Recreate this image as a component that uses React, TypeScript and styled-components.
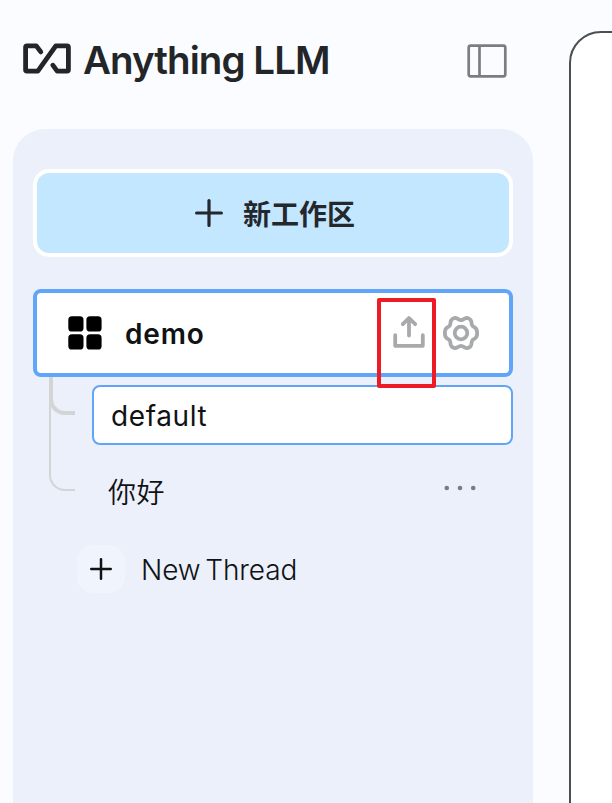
import React from "react";
import styled, { createGlobalStyle } from "styled-components";

const Global = createGlobalStyle`
  * { box-sizing: border-box; }
  html, body { margin: 0; background: #fafcff; overflow: hidden; }
  body { font-family: Inter, "Noto Sans CJK SC", sans-serif; color: #101214; }
  svg { display: block; flex: none; }
`;

const Page = styled.div`
  display: flex;
  height: 803px;
  width: 612px;
  overflow: hidden;
  background: #fafcff;
`;

const Sidebar = styled.aside`
  flex: none;
  width: 569px;
  padding-left: 13px;
  display: flex;
  flex-direction: column;
`;

const Header = styled.header`
  height: 129px;
  width: 520px;
  padding: 36px 26px 0 10px;
  display: flex;
  align-items: flex-start;
  justify-content: space-between;
`;

const Brand = styled.div`
  display: flex;
  align-items: flex-start;
  height: 48px;
  gap: 12px;
  padding-top: 7px;
  color: #222628;
`;

const BrandName = styled.span`
  margin-top: -7px;
  font-size: 38.5px;
  font-weight: 600;
  line-height: 48px;
  letter-spacing: -0.95px;
  white-space: nowrap;
`;

const SidebarToggle = styled.button`
  padding: 8px 0 0;
  border: 0;
  background: none;
  color: #7c7d7f;
`;

const Card = styled.div`
  width: 520px;
  flex: 1;
  padding: 40px 20px 0;
  border-radius: 32px 32px 0 0;
  background: #ecf0fa;
`;

const NewWorkspace = styled.button`
  display: flex;
  align-items: center;
  justify-content: center;
  gap: 20px;
  width: 480px;
  height: 88px;
  padding: 0 0 0 4px;
  border: 4px solid #fff;
  border-radius: 16px;
  background: #c3e7ff;
  color: #24272c;
  font: 700 28px/40px "Noto Sans CJK SC", sans-serif;
`;

const Workspace = styled.div`
  position: relative;
  z-index: 1;
  display: flex;
  align-items: center;
  width: 480px;
  height: 88px;
  margin-top: 32px;
  padding: 0 30px 0 31px;
  border: 4px solid #60a5fa;
  border-radius: 8px;
  background: #fff;
  color: #000;
`;

const WorkspaceName = styled.span`
  flex: 1;
  padding: 2px 0 0 23px;
  font-size: 28px;
  font-weight: 600;
  line-height: 36px;
  letter-spacing: 0.8px;
  color: #101214;
`;

const Actions = styled.div`
  display: flex;
  gap: 18px;
  color: #a7a9ab;
`;

const Highlight = styled.div`
  position: absolute;
  left: 340px;
  top: 5px;
  width: 59px;
  height: 90px;
  border: 4px solid #ed1c24;
  border-radius: 2px;
`;

const Threads = styled.div`
  position: relative;
  padding: 8px 0 0 59px;
`;

const Branch = styled.div<{ $height: number; $thick?: boolean }>`
  position: absolute;
  left: 16px;
  top: 0;
  width: 26px;
  height: ${(p) => p.$height}px;
  border: solid #d3d4d6;
  border-width: ${(p) => (p.$thick ? "0 0 4px 4px" : "0 0 2px 2px")};
  border-bottom-left-radius: 16px;
`;

const Thread = styled.div<{ $active?: boolean }>`
  display: flex;
  align-items: center;
  justify-content: space-between;
  height: ${(p) => (p.$active ? 60 : 84)}px;
  padding: ${(p) => (p.$active ? "2px 16px 0 17px" : "2px 37px 0 16px")};
  border: ${(p) => (p.$active ? "2px solid #60a5fa" : "0")};
  border-radius: 8px;
  background: ${(p) => (p.$active ? "#fff" : "transparent")};
  color: #7a7c7f;
`;

const ThreadName = styled.span<{ $cjk?: boolean }>`
  padding-top: ${(p) => (p.$cjk ? 6 : 0)}px;
  font-family: ${(p) => (p.$cjk ? '"Noto Sans CJK SC"' : "Inter")}, sans-serif;
  font-size: 28px;
  font-weight: ${(p) => (p.$cjk ? 350 : 400)};
  line-height: 40px;
  letter-spacing: ${(p) => (p.$cjk ? "0.4px" : "0.6px")};
  color: #101214;
`;

const NewThread = styled.button`
  display: flex;
  align-items: center;
  gap: 16px;
  margin: 16px 0 0 44px;
  padding: 0;
  border: 0;
  background: none;
  font: 300 28px/40px Inter, sans-serif;
  word-spacing: -3px;
  letter-spacing: -0.1px;
  color: #101214;
`;

const NewThreadLabel = styled.span`
  padding-top: 2px;
`;

const PlusTile = styled.span`
  display: grid;
  place-items: center;
  width: 48px;
  height: 48px;
  border-radius: 16px;
  background: #f0f4fc;
`;

const MainPanel = styled.main`
  flex: none;
  width: 100px;
  height: 900px;
  margin-top: 31px;
  border: 2px solid #4b4e52;
  border-radius: 32px;
  background: #fff;
`;

const Logo = () => (
  <svg width="48" height="31" viewBox="0 0 48 31" fill="none" stroke="currentColor" strokeWidth="4.8" strokeLinecap="round" strokeLinejoin="round">
    <path d="M17.8 8.9 13.3 2.8H4Q2.6 2.8 2.6 4.2v22.6Q2.6 28.2 4 28.2h10.8L32.8 2.8H44Q45.4 2.8 45.4 4.2v22.6Q45.4 28.2 44 28.2h-9.8L29.8 22.2" />
  </svg>
);

const Panels = () => (
  <svg width="40" height="34" viewBox="0 0 40 34" fill="none" stroke="currentColor" strokeWidth="2.7">
    <rect x="1.7" y="1.7" width="36.6" height="30.6" rx="2" />
    <path d="M12.5 2v30" />
  </svg>
);

const Plus = ({ size, weight }: { size: number; weight: number }) => (
  <svg width={size} height={size} viewBox={`0 0 ${size} ${size}`} stroke="currentColor" strokeWidth={weight} strokeLinecap="round">
    <path d={`M${size / 2} ${weight / 2}V${size - weight / 2}M${weight / 2} ${size / 2}H${size - weight / 2}`} />
  </svg>
);

const Squares = () => (
  <svg width="34" height="34" viewBox="0 0 34 34" fill="currentColor">
    <rect x="0.3" y="0.3" width="15.2" height="15.2" rx="3.6" />
    <rect x="18.4" y="0.3" width="15.2" height="15.2" rx="3.6" />
    <rect x="0.3" y="18.3" width="15.2" height="15.2" rx="3.6" />
    <rect x="18.4" y="18.3" width="15.2" height="15.2" rx="3.6" />
  </svg>
);

const Upload = () => (
  <svg width="32" height="36" viewBox="0 0 32 36" fill="none" stroke="currentColor" strokeWidth="3.8" strokeLinecap="round" strokeLinejoin="round">
    <path d="M2.2 20.2v10.6h27.6V20.2M16 20.5V3.2M9.8 9.2 16 3l6.2 6.2" />
  </svg>
);

const Gear = () => (
  <svg width="36" height="36" viewBox="0 0 36 36" fill="none" stroke="currentColor" strokeWidth="3.8" strokeLinejoin="round">
    <circle cx="18" cy="18" r="6.3" />
    <path d="M18 5.2C20.4 5.2 21.9 2.8 24 2.8Q28 4 28.4 6.8C28.7 10.4 29 11 31.6 12.4Q34.3 14 34.1 18Q34.3 22 31.6 23.6C29 25 28.7 25.6 28.4 29.2Q28 32 24 33.2C21.9 33.2 20.4 30.8 18 30.8C15.6 30.8 14.1 33.2 12 33.2Q8 32 7.6 29.2C7.3 25.6 7 25 4.4 23.6Q1.7 22 1.9 18Q1.7 14 4.4 12.4C7 11 7.3 10.4 7.6 6.8Q8 4 12 2.8C14.1 2.8 15.6 5.2 18 5.2Z" />
  </svg>
);

const Dots = () => (
  <svg width="32" height="6" viewBox="0 0 32 6" fill="currentColor">
    <circle cx="2.8" cy="3" r="2.3" />
    <circle cx="16" cy="3" r="2.3" />
    <circle cx="29.2" cy="3" r="2.3" />
  </svg>
);

export default function App() {
  return (
    <>
      <Global />
      <Page>
        <Sidebar>
          <Header>
            <Brand>
              <Logo />
              <BrandName>Anything LLM</BrandName>
            </Brand>
            <SidebarToggle aria-label="Toggle sidebar">
              <Panels />
            </SidebarToggle>
          </Header>
          <Card>
            <NewWorkspace>
              <Plus size={28} weight={3.2} />
              新工作区
            </NewWorkspace>
            <Workspace>
              <Squares />
              <WorkspaceName>demo</WorkspaceName>
              <Actions>
                <Upload />
                <Gear />
              </Actions>
              <Highlight />
            </Workspace>
            <Threads>
              <Branch $height={38} $thick />
              <Branch $height={114} />
              <Thread $active>
                <ThreadName>default</ThreadName>
              </Thread>
              <Thread>
                <ThreadName $cjk>你好</ThreadName>
                <Dots />
              </Thread>
            </Threads>
            <NewThread>
              <PlusTile>
                <Plus size={22} weight={2.5} />
              </PlusTile>
              <NewThreadLabel>New Thread</NewThreadLabel>
            </NewThread>
          </Card>
        </Sidebar>
        <MainPanel />
      </Page>
    </>
  );
}
